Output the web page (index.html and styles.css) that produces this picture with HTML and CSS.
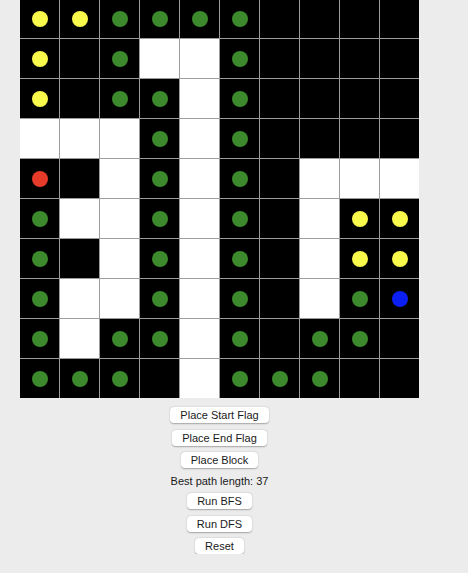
FILE: index.html
```html
<!DOCTYPE html>
<html>
<head>
<meta charset="utf-8">
<link rel="stylesheet" href="styles.css">
</head>
<body>
<div class="app">
  <div class="grid">
    <div class="cell"><span class="dot y"></span></div><div class="cell"><span class="dot y"></span></div><div class="cell"><span class="dot g"></span></div><div class="cell"><span class="dot g"></span></div><div class="cell"><span class="dot g"></span></div><div class="cell"><span class="dot g"></span></div><div class="cell"></div><div class="cell"></div><div class="cell"></div><div class="cell"></div>
    <div class="cell"><span class="dot y"></span></div><div class="cell"></div><div class="cell"><span class="dot g"></span></div><div class="cell w"></div><div class="cell w"></div><div class="cell"><span class="dot g"></span></div><div class="cell"></div><div class="cell"></div><div class="cell"></div><div class="cell"></div>
    <div class="cell"><span class="dot y"></span></div><div class="cell"></div><div class="cell"><span class="dot g"></span></div><div class="cell"><span class="dot g"></span></div><div class="cell w"></div><div class="cell"><span class="dot g"></span></div><div class="cell"></div><div class="cell"></div><div class="cell"></div><div class="cell"></div>
    <div class="cell w"></div><div class="cell w"></div><div class="cell w"></div><div class="cell"><span class="dot g"></span></div><div class="cell w"></div><div class="cell"><span class="dot g"></span></div><div class="cell"></div><div class="cell"></div><div class="cell"></div><div class="cell"></div>
    <div class="cell"><span class="dot r"></span></div><div class="cell"></div><div class="cell w"></div><div class="cell"><span class="dot g"></span></div><div class="cell w"></div><div class="cell"><span class="dot g"></span></div><div class="cell"></div><div class="cell w"></div><div class="cell w"></div><div class="cell w"></div>
    <div class="cell"><span class="dot g"></span></div><div class="cell w"></div><div class="cell w"></div><div class="cell"><span class="dot g"></span></div><div class="cell w"></div><div class="cell"><span class="dot g"></span></div><div class="cell"></div><div class="cell w"></div><div class="cell"><span class="dot y"></span></div><div class="cell"><span class="dot y"></span></div>
    <div class="cell"><span class="dot g"></span></div><div class="cell"></div><div class="cell w"></div><div class="cell"><span class="dot g"></span></div><div class="cell w"></div><div class="cell"><span class="dot g"></span></div><div class="cell"></div><div class="cell w"></div><div class="cell"><span class="dot y"></span></div><div class="cell"><span class="dot y"></span></div>
    <div class="cell"><span class="dot g"></span></div><div class="cell w"></div><div class="cell w"></div><div class="cell"><span class="dot g"></span></div><div class="cell w"></div><div class="cell"><span class="dot g"></span></div><div class="cell"></div><div class="cell w"></div><div class="cell"><span class="dot g"></span></div><div class="cell"><span class="dot b"></span></div>
    <div class="cell"><span class="dot g"></span></div><div class="cell w"></div><div class="cell"><span class="dot g"></span></div><div class="cell"><span class="dot g"></span></div><div class="cell w"></div><div class="cell"><span class="dot g"></span></div><div class="cell"></div><div class="cell"><span class="dot g"></span></div><div class="cell"><span class="dot g"></span></div><div class="cell"></div>
    <div class="cell"><span class="dot g"></span></div><div class="cell"><span class="dot g"></span></div><div class="cell"><span class="dot g"></span></div><div class="cell"></div><div class="cell w"></div><div class="cell"><span class="dot g"></span></div><div class="cell"><span class="dot g"></span></div><div class="cell"><span class="dot g"></span></div><div class="cell"></div><div class="cell"></div>
  </div>
  <div class="controls">
    <button class="btn">Place Start Flag</button>
    <button class="btn">Place End Flag</button>
    <button class="btn">Place Block</button>
    <div class="info">Best path length: 37</div>
    <button class="btn">Run BFS</button>
    <button class="btn">Run DFS</button>
    <button class="btn">Reset</button>
  </div>
</div>
</body>
</html>
```
FILE: styles.css
```css
html, body {
  margin: 0;
  padding: 0;
  background: #ececec;
  font-family: "Liberation Sans", Arial, sans-serif;
}
.app {
  width: 399px;
  margin: -1px 0 0 20px;
  display: flex;
  flex-direction: column;
  align-items: center;
}
.grid {
  display: grid;
  grid-template-columns: repeat(10, 39px);
  grid-template-rows: repeat(10, 39px);
  gap: 1px;
  background: #9c9c9c;
  width: 399px;
  height: 399px;
}
.cell {
  background: #000;
  display: flex;
  align-items: center;
  justify-content: center;
}
.cell.w {
  background: #fff;
}
.dot {
  width: 16px;
  height: 16px;
  border-radius: 50%;
  display: block;
}
.dot.y { background: #f9f94c; }
.dot.g { background: #3c8a2c; }
.dot.r { background: #e63b2b; }
.dot.b { background: #0b1ff2; }
.controls {
  margin-top: 9px;
  display: flex;
  flex-direction: column;
  align-items: center;
  gap: 6.5px;
}
.btn {
  font-family: "Liberation Sans", Arial, sans-serif;
  font-size: 11px;
  color: #1a1a1a;
  background: #fff;
  border: none;
  border-radius: 4px;
  height: 16px;
  padding: 0 10px;
  line-height: 16px;
  box-shadow: 0 0.5px 1.5px rgba(0, 0, 0, 0.3);
}
.info {
  font-size: 11px;
  line-height: 12px;
  color: #1a1a1a;
}
```
